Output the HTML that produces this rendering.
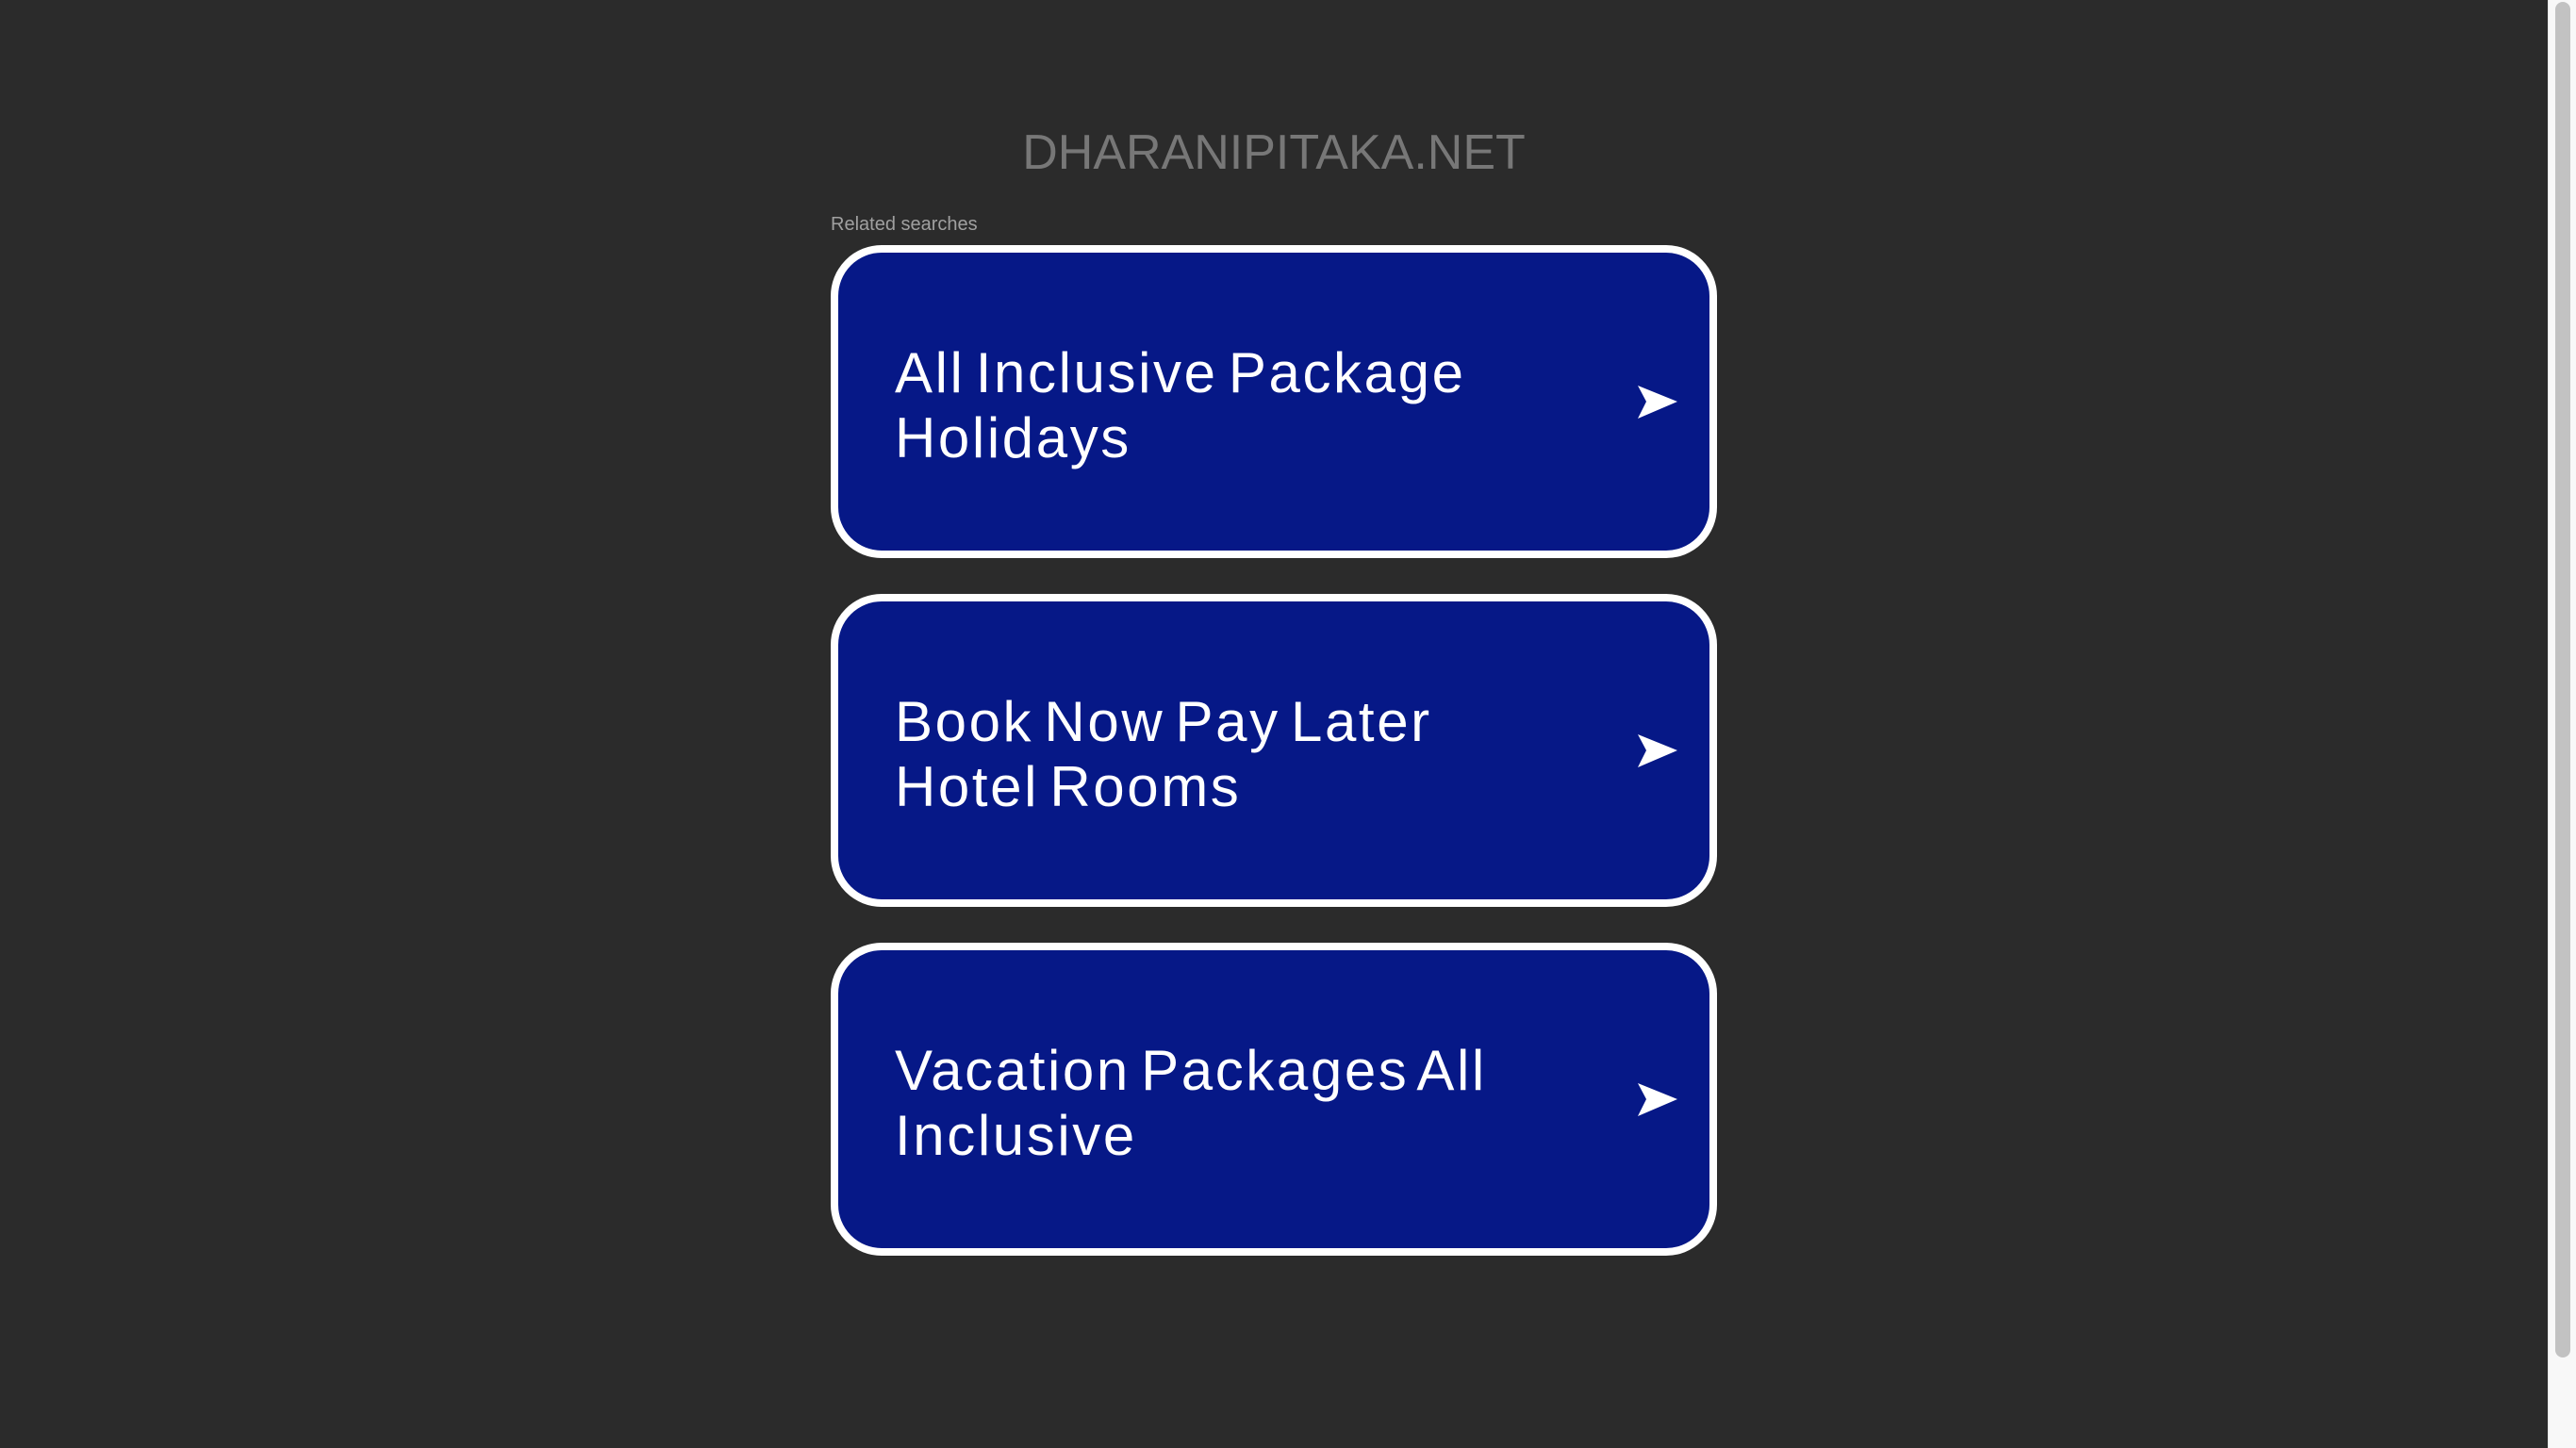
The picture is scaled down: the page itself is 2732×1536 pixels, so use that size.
<!DOCTYPE html>
<html><head><meta charset="utf-8"><style>
html,body{margin:0;padding:0;}
body{width:2732px;height:1536px;background:#2b2b2b;position:relative;overflow:hidden;font-family:"Liberation Sans",Arial,sans-serif;}
.title{position:absolute;left:0;width:2702px;top:130px;text-align:center;font-size:52px;color:#777;line-height:64px;}
.rel{position:absolute;left:881px;top:227px;font-size:20px;color:#a0a0a0;}
.card{position:absolute;left:881px;width:924px;height:316px;border:8px solid #fff;border-radius:54px;background:#061887;}
.card .t{position:absolute;left:60px;top:50%;transform:translateY(-47%);color:#fff;font-size:60px;line-height:69px;letter-spacing:2.6px;word-spacing:-8px;width:720px;}
.card svg{position:absolute;left:848px;top:141px;}
.sb{position:absolute;left:2702px;top:0;width:30px;height:1536px;background:#f8f8f8;border-left:1px solid #e8e8e8;}
.th{position:absolute;left:2710px;top:2px;width:16px;height:1438px;background:#c2c2c2;border-radius:8px;}
</style></head><body>
<div class="title">DHARANIPITAKA.NET</div>
<div class="rel">Related searches</div>
<div class="card" style="top:260px"><div class="t">All Inclusive Package Holidays</div><svg width="44" height="38" viewBox="0 0 44 38"><path d="M0 0 L42 17 L0 35 L9 17 Z" fill="#fff"/></svg></div>
<div class="card" style="top:630px"><div class="t">Book Now Pay Later<br>Hotel Rooms</div><svg width="44" height="38" viewBox="0 0 44 38"><path d="M0 0 L42 17 L0 35 L9 17 Z" fill="#fff"/></svg></div>
<div class="card" style="top:1000px"><div class="t">Vacation Packages All<br>Inclusive</div><svg width="44" height="38" viewBox="0 0 44 38"><path d="M0 0 L42 17 L0 35 L9 17 Z" fill="#fff"/></svg></div>
<div class="sb"></div><div class="th"></div>
</body></html>
